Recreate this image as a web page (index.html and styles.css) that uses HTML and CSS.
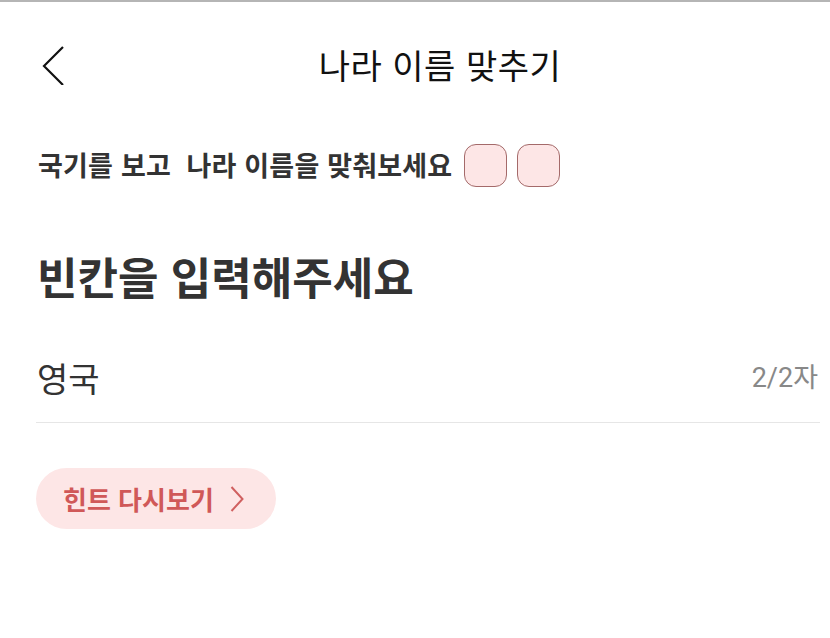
FILE: index.html
```html
<!DOCTYPE html>
<html lang="ko">
<head>
<meta charset="utf-8">
<link rel="stylesheet" href="styles.css">
</head>
<body>
<div class="screen">
  <header class="topbar">
    <button class="back" aria-label="뒤로">
      <svg width="24" height="40" viewBox="0 0 24 40"><path d="M21 2 L2 21 L21 40" fill="none" stroke="#111" stroke-width="2.2"/></svg>
    </button>
    <h1 class="title">나라 이름 맞추기</h1>
  </header>
  <main class="content">
    <div class="prompt">
      <span class="prompt-text">국기를 보고&nbsp; 나라 이름을 맞춰보세요</span>
      <span class="slot"></span>
      <span class="slot"></span>
    </div>
    <h2 class="heading">빈칸을 입력해주세요</h2>
    <div class="field">
      <span class="value">영국</span>
      <span class="count">2/2자</span>
    </div>
    <button class="hint">힌트 다시보기
      <svg width="14" height="26" viewBox="0 0 14 26"><path d="M1.5 1 L12.5 13 L1.5 25" fill="none" stroke="#d06060" stroke-width="2"/></svg>
    </button>
  </main>
</div>
</body>
</html>
```

FILE: styles.css
```css
html, body {
  margin: 0;
  padding: 0;
  background: #fff;
}
body {
  font-family: "Noto Sans CJK KR", "Noto Sans", sans-serif;
  color: #333;
}
.screen {
  border-top: 2px solid #b5b5b5;
  width: 830px;
  height: 636px;
}
.topbar {
  position: relative;
  height: 126px;
  display: flex;
  align-items: center;
  justify-content: center;
}
.back {
  position: absolute;
  left: 42px;
  top: 43px;
  border: 0;
  background: none;
  padding: 0;
  width: 24px;
  height: 42px;
}
.title {
  margin: 0 0 0 50px;
  font-size: 34px;
  font-weight: 400;
  color: #111;
  letter-spacing: 0.5px;
  line-height: 50px;
}
.content {
  padding: 0 10px 0 36px;
}
.prompt {
  display: flex;
  align-items: center;
  height: 60px;
  margin-top: 7px;
}
.prompt-text {
  font-size: 27px;
  font-weight: 700;
  color: #333;
  margin-left: 2px;
  margin-right: 12px;
  letter-spacing: 0.2px;
  line-height: 40px;
}
.slot {
  width: 41px;
  height: 41px;
  border: 1.5px solid #a46a6a;
  border-radius: 12px;
  background: #fde6e6;
  margin-right: 10px;
}
.heading {
  margin: 51px 0 0 1px;
  font-size: 44px;
  font-weight: 700;
  color: #333;
  line-height: 60px;
}
.field {
  display: flex;
  justify-content: space-between;
  align-items: center;
  height: 88px;
  border-bottom: 1px solid #e6e6e6;
  margin-top: 28px;
}
.value {
  font-size: 34px;
  color: #333;
  margin-left: 1px;
  line-height: 50px;
}
.count {
  font-family: "Roboto", "Noto Sans CJK KR", sans-serif;
  font-size: 27px;
  color: #888;
  margin-right: 2px;
  line-height: 40px;
}
.hint {
  margin-top: 45px;
  height: 61px;
  padding: 0 32px 0 27px;
  border: 0;
  border-radius: 31px;
  background: #fde6e6;
  color: #d05858;
  font-family: "Noto Sans CJK KR", sans-serif;
  font-size: 26px;
  font-weight: 700;
  display: flex;
  align-items: center;
  gap: 16px;
}
```
